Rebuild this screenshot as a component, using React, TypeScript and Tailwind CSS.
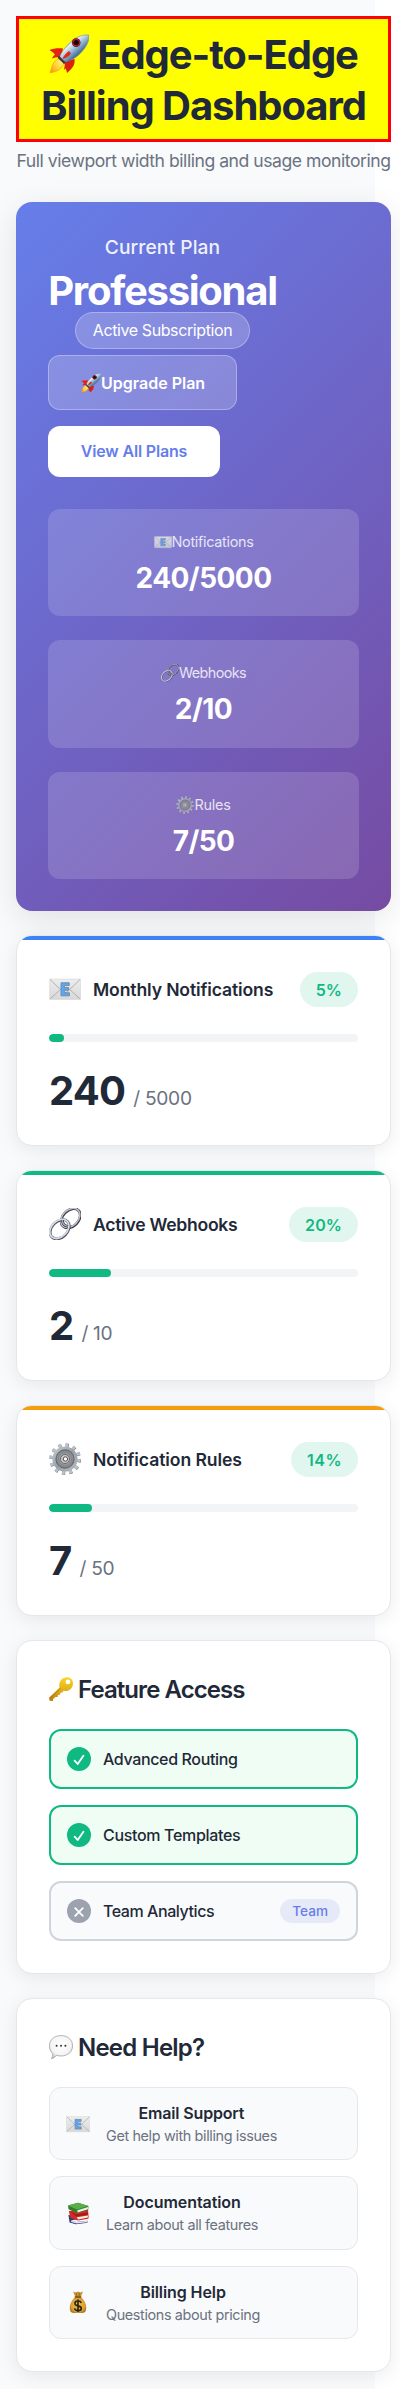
import type { ReactNode } from "react";

type IconProps = { className?: string };

function Rocket({ className = "" }: IconProps) {
  return (
    <svg viewBox="0 0 40 40" className={className} aria-hidden="true">
      <defs>
        <linearGradient id="rocketBody" x1="0.2" y1="0.2" x2="0.75" y2="0.8">
          <stop offset="0" stopColor="#7d9fc0" />
          <stop offset="0.3" stopColor="#e3edf5" />
          <stop offset="0.55" stopColor="#8fb3d3" />
          <stop offset="0.8" stopColor="#4a7099" />
          <stop offset="1" stopColor="#9fb0bd" />
        </linearGradient>
        <linearGradient id="rocketFlame" x1="1" y1="0" x2="0" y2="1">
          <stop offset="0" stopColor="#fff9a0" />
          <stop offset="0.5" stopColor="#ffd83a" />
          <stop offset="1" stopColor="#ff8a10" />
        </linearGradient>
      </defs>
      <path d="M14 14.5 C9 14 4 14.5 0.5 16 C3 17.5 5 19 6 20.5 C4.5 22 3.5 23 3 24.5 C6 23.5 9 23 12 23.5 Z" fill="#e5230f" />
      <path d="M25.5 25 C26 29 25.5 33 18 39 C17.5 36.5 17 35 16.5 34.5 L15 36 C15.5 33 16 30 16 27 Z" fill="#d9200c" />
      <path d="M6 27 C3 30 3 34 1 38.8 C5 38 9 37.5 12 34 C14 32 14.5 30 14.5 28 L10.5 24.5 Z" fill="url(#rocketFlame)" stroke="#ff9a1a" strokeWidth="0.7" />
      <path d="M40 1 C34 0.3 26 3 20.5 9 C16 13.5 12.5 18 10.5 23 L15.5 28.5 C22 26.5 28 23.5 33 17.5 C38 12 40.5 6 40 1 Z" fill="url(#rocketBody)" stroke="#607890" strokeWidth="0.5" />
      <path d="M9.8 21.5 L17 28.7 L15 30 L8.8 24 Z" fill="#4b3437" />
      <path d="M20 17 C17 19 14.5 22 13.5 25 C17 24 20 22.5 22 19.5 Z" fill="#df2a14" />
      <circle cx="27.2" cy="8.6" r="4.3" fill="#3b1014" />
      <circle cx="27.2" cy="8.6" r="3.3" fill="#12090c" stroke="#c4202a" strokeWidth="1.2" />
    </svg>
  );
}

function Mail({ className = "" }: IconProps) {
  return (
    <svg viewBox="0 0 32 32" className={className} aria-hidden="true">
      <defs>
        <linearGradient id="mailPaper" x1="0" y1="0" x2="0" y2="1">
          <stop offset="0" stopColor="#ededed" />
          <stop offset="1" stopColor="#d8d8d8" />
        </linearGradient>
      </defs>
      <rect x="0.7" y="6" width="30.8" height="20.4" rx="0.6" fill="url(#mailPaper)" stroke="#cfcfcf" strokeWidth="0.5" />
      <path d="M1 6.4 L14 19 Q16 20.6 18 19 L31.2 6.4 M1 26 L11.5 16.5 M31.2 26 L20.7 16.5" fill="none" stroke="#acacac" strokeWidth="0.9" />
      <path d="M12 9.8 H20.2 V12.6 H15.4 V14.6 H19.6 V17.3 H15.4 V19.8 H20.4 V22.8 H12 Z" fill="#5aa7f5" stroke="#6d86a3" strokeWidth="0.9" />
    </svg>
  );
}

function Chain({ className = "" }: IconProps) {
  return (
    <svg viewBox="0 0 32 32" className={className} aria-hidden="true">
      <g fill="none">
        <ellipse cx="21.7" cy="10.3" rx="11" ry="7.9" transform="rotate(-45 21.7 10.3)" stroke="#4a3a40" strokeWidth="2.8" />
        <ellipse cx="21.3" cy="9.9" rx="11" ry="7.9" transform="rotate(-45 21.3 9.9)" stroke="#b9c4d4" strokeWidth="1.5" />
        <ellipse cx="10.7" cy="21.3" rx="11" ry="7.9" transform="rotate(-45 10.7 21.3)" stroke="#594d52" strokeWidth="2.8" />
        <ellipse cx="10.3" cy="20.9" rx="11" ry="7.9" transform="rotate(-45 10.3 20.9)" stroke="#cfdff0" strokeWidth="1.8" />
        <path d="M13.5 12 C13.5 15 15.5 17.8 19 18.6" stroke="#4a3a40" strokeWidth="2.6" />
        <path d="M13.3 12 C13.3 15 15.3 17.6 18.8 18.4" stroke="#a4aebb" strokeWidth="1.3" />
      </g>
    </svg>
  );
}

function Gear({ className = "" }: IconProps) {
  return (
    <svg viewBox="0 0 32 32" className={className} aria-hidden="true">
      <defs>
        <linearGradient id="gearMetal" x1="0" y1="0" x2="1" y2="1">
          <stop offset="0" stopColor="#c3ccd4" />
          <stop offset="0.5" stopColor="#9aa0a8" />
          <stop offset="1" stopColor="#b9bcc0" />
        </linearGradient>
      </defs>
      <circle cx="16.3" cy="16.3" r="13.6" fill="none" stroke="#6d5c58" strokeWidth="4.2" strokeDasharray="3 4.12" />
      <circle cx="16" cy="16" r="13.7" fill="none" stroke="#b6c2cd" strokeWidth="4.2" strokeDasharray="3 4.17" />
      <circle cx="16" cy="16" r="12.6" fill="url(#gearMetal)" />
      <circle cx="16" cy="16" r="9" fill="#8b8e92" stroke="#6b6e73" strokeWidth="1.3" />
      <circle cx="16" cy="16" r="6.4" fill="#9da0a4" stroke="#7b7e83" strokeWidth="0.8" />
      <circle cx="16" cy="16" r="4.5" fill="#c9cdd2" stroke="#6c6668" strokeWidth="1" />
      <circle cx="16.4" cy="16" r="2.2" fill="#ffffff" stroke="#58484a" strokeWidth="1" />
    </svg>
  );
}

function Key({ className = "" }: IconProps) {
  return (
    <svg viewBox="0 0 24 24" className={className} aria-hidden="true">
      <defs>
        <linearGradient id="keyGold" x1="0" y1="0" x2="0" y2="1">
          <stop offset="0" stopColor="#f7d629" />
          <stop offset="0.55" stopColor="#e3ae18" />
          <stop offset="1" stopColor="#b97c10" />
        </linearGradient>
      </defs>
      <path
        fillRule="evenodd"
        d="M17 0.4 C21 0 24 2.6 24 6.4 C24 10.8 20.3 14.3 16 14 L14.6 13.8 L13.4 15.4 L11.6 15.6 L11.2 17.6 L9 18 L8.6 20 L6.4 20 L4.2 22 L3.8 24 L0.6 23.8 L0 20.8 L10.6 10.4 C9.2 5.4 12.2 0.9 17 0.4 Z M18.9 2.5 A2.4 2.4 0 1 0 18.9 7.3 A2.4 2.4 0 1 0 18.9 2.5 Z"
        fill="url(#keyGold)"
      />
      <path d="M1 21.4 L11.6 11.2" stroke="#9a6a10" strokeWidth="0.8" />
    </svg>
  );
}

function Speech({ className = "" }: IconProps) {
  return (
    <svg viewBox="0 0 24 24" className={className} aria-hidden="true">
      <defs>
        <radialGradient id="bubbleFill" cx="0.5" cy="0.4" r="0.62">
          <stop offset="0" stopColor="#ffffff" />
          <stop offset="0.7" stopColor="#f4f4f4" />
          <stop offset="1" stopColor="#c4c4c4" />
        </radialGradient>
      </defs>
      <path
        d="M12 0.6 C18.6 0.6 23.6 4.6 23.6 10.8 C23.6 17 18.6 21 12 21 C10.4 21 8.8 20.8 7.6 20.3 C6.2 22 4.6 23.3 2.4 23.6 C3.4 22.2 3.9 20.5 3.7 18.6 C1.6 16.7 0.4 14 0.4 10.8 C0.4 4.6 5.4 0.6 12 0.6 Z"
        fill="url(#bubbleFill)"
        stroke="#a3a3a3"
        strokeWidth="0.8"
      />
      <circle cx="7.6" cy="10.8" r="1" fill="#333" />
      <circle cx="12" cy="10.8" r="1" fill="#333" />
      <circle cx="16.4" cy="10.8" r="1" fill="#333" />
    </svg>
  );
}

function Books({ className = "" }: IconProps) {
  return (
    <svg viewBox="0 0 24 24" className={className} aria-hidden="true">
      <path d="M2.4 14 L3.6 21.6 L10 23.2 L21.4 21.8 L21.4 19.8 L10.4 21 L5 19.6 L22 16 Z" fill="#34397e" />
      <path d="M5 19.4 L11 21 L21 19.8 L21 21.2 L10.6 22.4 L5.2 21 Z" fill="#e4e2ea" />
      <path d="M2.8 10 L4.4 16.8 L11.8 19.6 L22.4 17.8 L22.6 15.6 L22 8.6 Z" fill="#d42a22" />
      <path d="M10.8 16.2 L22 14.4 L21.8 16.6 L12 18.6 Z" fill="#f3eeee" />
      <path d="M4 10.6 L10.4 13.4 L22 11.6 L22 13.4 L10.6 15.6 Z" fill="#a31a17" />
      <path d="M2 4.6 L12 1.8 L22.4 5 L22.2 9 L10.8 12.2 L2.6 8.2 Z" fill="#2f7f2d" />
      <path d="M2 4.6 L12 1.8 L22.4 5 L11 8.6 Z" fill="#5aad48" />
      <path d="M11.4 9.2 L22.2 5.9 L21.8 8.3 L11.6 11.4 Z" fill="#eef0ea" />
    </svg>
  );
}

function MoneyBag({ className = "" }: IconProps) {
  return (
    <svg viewBox="0 0 24 24" className={className} aria-hidden="true">
      <defs>
        <radialGradient id="bagFill" cx="0.5" cy="0.5" r="0.6">
          <stop offset="0" stopColor="#f0c04a" />
          <stop offset="0.7" stopColor="#d9a131" />
          <stop offset="1" stopColor="#9a6a1c" />
        </radialGradient>
      </defs>
      <path d="M7 1.6 L9.6 2.4 L12 1.4 L14.4 2.4 L17 1.6 L14.8 7 L9.4 7 Z" fill="#c89234" />
      <path d="M10 2.8 L11 6.4 M13.8 2.8 L13 6.4" stroke="#8a5e1c" strokeWidth="0.7" />
      <path d="M9.4 7 H14.8 C18 9.6 20.2 13.6 20.2 17.6 C20.2 21.4 18.8 23 16.6 23 H7.4 C5.2 23 3.8 21.4 3.8 17.6 C3.8 13.6 6.2 9.6 9.4 7 Z" fill="url(#bagFill)" />
      <rect x="8.6" y="6" width="6.8" height="1.9" rx="0.9" fill="#8f5f1d" />
      <path
        d="M15.2 12.9 C14.8 11.6 13.6 11 12 11 C10.2 11 8.9 11.9 8.9 13.4 C8.9 16.9 15.3 14.9 15.3 18.2 C15.3 19.7 13.9 20.6 12 20.6 C10.2 20.6 8.9 19.8 8.6 18.4 M12 9.5 V22"
        fill="none"
        stroke="#2a2316"
        strokeWidth="1.6"
      />
    </svg>
  );
}

function PlanStat({ icon, label, value, labelClass, valueClass }: { icon: ReactNode; label: string; value: string; labelClass: string; valueClass: string }) {
  return (
    <div className="flex h-[107.5px] flex-col items-center rounded-xl bg-white/15 pt-6">
      <div className="flex h-[17.6px] items-center opacity-80">
        {icon}
        <span className={`text-[14.4px] leading-[17.6px] ${labelClass}`}>{label}</span>
      </div>
      <div className={`mt-[10px] text-[28px] leading-[34px] font-bold ${valueClass}`}>{value}</div>
    </div>
  );
}

type UsageProps = {
  icon: ReactNode;
  title: string;
  titleClass: string;
  percent: string;
  percentClass: string;
  fill: number;
  bar: string;
  used: string;
  usedClass: string;
  limit: string;
};

function UsageCard({ icon, title, titleClass, percent, percentClass, fill, bar, used, usedClass, limit }: UsageProps) {
  return (
    <section className="h-[211px] overflow-hidden rounded-2xl border border-[#e5e7eb] bg-white shadow-[0_4px_20px_rgba(0,0,0,0.08)]">
      <div className={`h-1 ${bar}`} />
      <div className="px-8 pt-7">
        <div className="flex h-[41.8px] items-center justify-between">
          <div className="flex items-center">
            {icon}
            <h3 className={`ml-3 pt-[2px] text-[17.6px] leading-6 text-[#1f2937] ${titleClass}`}>{title}</h3>
          </div>
          <span className={`rounded-full bg-[#10b981]/12 px-4 pt-px text-[16px] leading-[34.3px] font-semibold text-[#10b981] ${percentClass}`}>{percent}</span>
        </div>
        <div className="mt-6 h-2 overflow-hidden rounded bg-[#f3f4f6]">
          <div className="h-full rounded bg-[#10b981]" style={{ width: `${fill}%` }} />
        </div>
        <div className="mt-[25px] flex items-baseline">
          <span className={`text-[40px] leading-[47px] font-bold text-[#1f2937] ${usedClass}`}>{used}</span>
          <span className="ml-2 text-[19.2px] leading-6 tracking-[-0.3px] text-[#6b7280]">{limit}</span>
        </div>
      </div>
    </section>
  );
}

function Feature({ name, nameClass, enabled, tag }: { name: string; nameClass: string; enabled: boolean; tag?: string }) {
  return (
    <li className={`flex h-[60px] items-center rounded-xl border-2 px-4 ${enabled ? "border-[#10b981] bg-[#f0fdf4]" : "border-[#d1d5db] bg-[#f9fafb]"}`}>
      <span className={`flex size-6 items-center justify-center rounded-full ${enabled ? "bg-[#10b981]" : "bg-[#9ca3af]"}`}>
        <svg viewBox="0 0 24 24" className="size-6" fill="none" stroke="#fff" strokeWidth="1.8" strokeLinecap="round" strokeLinejoin="round">
          {enabled ? <path d="M7.6 13.6 L10.7 17 L16.4 8.8" /> : <path d="M8.2 9.2 L15.8 16.8 M15.8 9.2 L8.2 16.8" />}
        </svg>
      </span>
      <span className={`ml-3 flex-1 text-[16px] leading-6 font-medium text-[#1f2937] ${nameClass}`}>{name}</span>
      {tag && <span className="rounded-xl bg-[#667eea]/12 px-3 text-[13.6px] leading-[24.5px] font-medium text-[#667eea]">{tag}</span>}
    </li>
  );
}

function HelpLink({ icon, title, titleClass, text }: { icon: ReactNode; title: string; titleClass: string; text: string }) {
  return (
    <li className="flex h-[73.3px] items-center rounded-xl border border-[#e5e7eb] bg-[#f9fafb] pl-4">
      {icon}
      <div className="ml-4 pt-[1.6px] text-center">
        <div className={`text-[16px] leading-[19px] font-semibold text-[#1f2937] ${titleClass}`}>{title}</div>
        <div className="mt-1 text-[14.4px] leading-[17.5px] tracking-[-0.36px] text-[#6b7280]">{text}</div>
      </div>
    </li>
  );
}

export default function App() {
  return (
    <div className="min-h-[2389px] overflow-hidden bg-white font-['Inter',sans-serif]">
      <div className="min-h-[2389px] w-[375px] bg-[#f8fafc]">
        <main className="flex w-[391px] flex-col pt-4 pl-4">
          <header className="text-center whitespace-nowrap">
            <h1 className="h-[125.7px] border-[3px] border-[#ff0000] bg-[#ffff00] pt-[11px] text-[40px] leading-[50.7px] font-bold tracking-[-1.06px] text-[#1f2937]">
              <span className="flex items-center justify-center">
                <Rocket className="mr-2 mb-[2px] size-10" />
                Edge-to-Edge
              </span>
              <span className="block">Billing Dashboard</span>
            </h1>
            <p className="mt-[8.6px] text-[17.6px] leading-[22px] tracking-[-0.47px] text-[#6b7280]">Full viewport width billing and usage monitoring</p>
          </header>

          <section className="mt-[29.7px] h-[709.5px] rounded-2xl bg-[linear-gradient(135deg,#667eea_0%,#764ba2_100%)] p-8 text-white shadow-[0_8px_32px_rgba(0,0,0,0.1)]">
            <div className="flex w-[229px] flex-col items-center whitespace-nowrap">
              <h2 className="text-[19.2px] leading-[26px] font-medium tracking-[0.08px] opacity-90">Current Plan</h2>
              <div className="mt-[8.8px] text-[40px] leading-[43px] font-bold tracking-[-1.27px]">Professional</div>
              <div className="rounded-full border border-white/30 bg-white/20 px-[16.5px] text-[16px] leading-[34.8px] tracking-[-0.4px]">Active Subscription</div>
            </div>
            <div className="mt-[6.4px] flex flex-col items-start gap-4">
              <button className="flex h-[55.3px] w-[189.3px] items-center rounded-xl border border-white/30 bg-white/20 pl-8 text-[16px] font-semibold">
                <Rocket className="size-5" />
                Upgrade Plan
              </button>
              <button className="h-[50.7px] w-[172px] rounded-xl bg-white pb-[2px] text-[16px] font-semibold tracking-[-0.18px] text-[#667eea]">View All Plans</button>
            </div>
            <div className="mt-8 flex flex-col gap-6">
              <PlanStat icon={<Mail className="size-[18px]" />} label="Notifications" value="240/5000" labelClass="tracking-[-0.3px]" valueClass="tracking-[-0.55px]" />
              <PlanStat icon={<Chain className="size-[18px]" />} label="Webhooks" value="2/10" labelClass="tracking-[-0.6px]" valueClass="tracking-[-0.5px]" />
              <PlanStat icon={<Gear className="size-[18px]" />} label="Rules" value="7/50" labelClass="tracking-[-0.24px]" valueClass="tracking-[-0.6px]" />
            </div>
          </section>

          <div className="mt-6 flex flex-col gap-6">
            <UsageCard icon={<Mail className="size-8" />} title="Monthly Notifications" titleClass="font-semibold tracking-[-0.14px]" percent="5%" percentClass="tracking-[0.1px]" fill={5} bar="bg-[#3b82f6]" used="240" usedClass="tracking-[-0.8px]" limit="/ 5000" />
            <UsageCard icon={<Chain className="size-8" />} title="Active Webhooks" titleClass="font-semibold tracking-[-0.29px]" percent="20%" percentClass="tracking-[0.1px]" fill={20} bar="bg-[#10b981]" used="2" usedClass="tracking-[-0.8px]" limit="/ 10" />
            <UsageCard icon={<Gear className="size-8" />} title="Notification Rules" titleClass="font-semibold tracking-[-0.1px]" percent="14%" percentClass="tracking-[0.5px]" fill={14} bar="bg-[#f59e0b]" used="7" usedClass="tracking-[-0.8px]" limit="/ 50" />

            <section className="h-[334px] rounded-2xl border border-[#e5e7eb] bg-white p-8 shadow-[0_4px_20px_rgba(0,0,0,0.08)]">
              <h2 className="flex h-[31.5px] items-center text-[24px] leading-[29.5px] font-semibold tracking-[-0.93px] text-[#1f2937]">
                <Key className="mr-[5px] size-6" />
                <span className="pt-[2px]">Feature Access</span>
              </h2>
              <ul className="mt-6 flex flex-col gap-4">
                <Feature name="Advanced Routing" nameClass="tracking-[-0.36px]" enabled />
                <Feature name="Custom Templates" nameClass="tracking-[-0.33px]" enabled />
                <Feature name="Team Analytics" nameClass="tracking-[-0.44px] pt-px" enabled={false} tag="Team" />
              </ul>
            </section>

            <section className="rounded-2xl border border-[#e5e7eb] bg-white p-8 shadow-[0_4px_20px_rgba(0,0,0,0.08)]">
              <h2 className="flex h-[31.5px] items-center text-[24px] leading-[29.5px] font-semibold tracking-[-0.77px] text-[#1f2937]">
                <Speech className="mr-[5px] size-6" />
                <span className="pt-[2px]">Need Help?</span>
              </h2>
              <ul className="mt-6 flex flex-col gap-4">
                <HelpLink icon={<Mail className="size-6" />} title="Email Support" titleClass="tracking-[-0.16px]" text="Get help with billing issues" />
                <HelpLink icon={<Books className="size-6" />} title="Documentation" titleClass="tracking-[-0.07px]" text="Learn about all features" />
                <HelpLink icon={<MoneyBag className="size-6" />} title="Billing Help" titleClass="tracking-[-0.09px]" text="Questions about pricing" />
              </ul>
            </section>
          </div>
        </main>
      </div>
    </div>
  );
}
